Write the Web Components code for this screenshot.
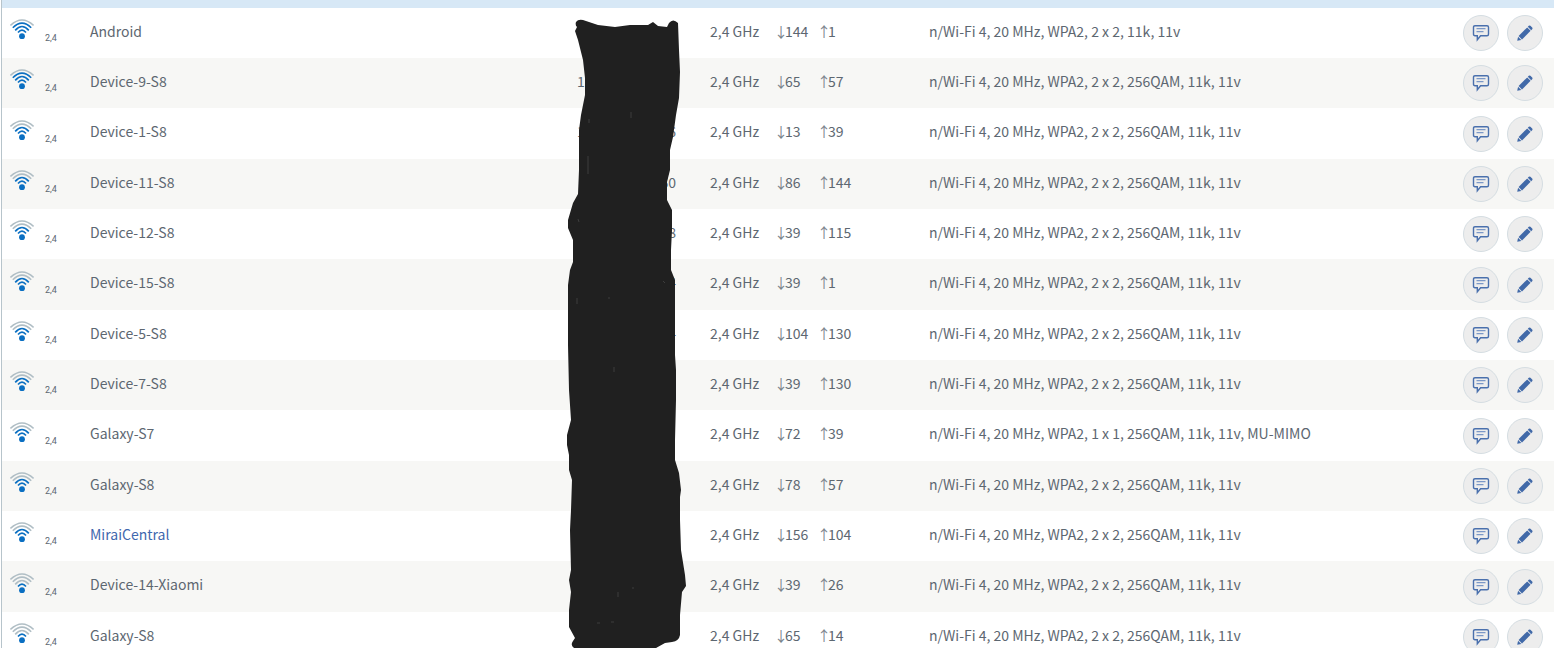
<!DOCTYPE html>
<html lang="en">
<head>
<meta charset="utf-8">
<title>Wireless devices</title>
<style>
  body {
    margin: 0;
    height: 100vh;
    overflow: hidden;
    background: #fff;
    color: #5d6771;
    font: 14px/20px "Noto Sans CJK SC", "Noto Sans", sans-serif;
  }
</style>
</head>
<body>
<device-list>
  <redaction-mark slot="overlay"></redaction-mark>
</device-list>

<script>
// signal strength, 0-4 blue arcs over the dot
class WifiSignal extends HTMLElement {
  constructor() {
    super();
    this.attachShadow({ mode: 'open' });
  }

  connectedCallback() {
    const level = Number(this.getAttribute('level'));
    const arcs = [
      'M8 15.4Q12 10.8 16 15.4',
      'M5.2 13.4Q12 5.6 18.8 13.4',
      'M2.8 10.8Q12 1.4 21.2 10.8',
      'M0.4 8.4Q12 -2.4 23.6 8.4'
    ];
    this.shadowRoot.innerHTML = `
      <style>
        :host { display: flex; gap: 11px; height: 27px; }
        svg { width: 24px; height: 24px; }
        path { fill: none; stroke: #b0bec5; stroke-width: 1.6; }
        path.on { stroke: #0a6fc2; }
        circle { fill: #0a6fc2; }
        span { align-self: flex-end; font: 9px/12px Roboto, sans-serif; }
      </style>
      <svg viewBox="0 0 24 24" role="img" aria-label="Signal ${level} of 4">
        ${arcs.map((d, i) => `<path class="${i < level ? 'on' : ''}" d="${d}"/>`).join('')}
        <circle cx="12" cy="19.2" r="2.9"/>
      </svg>
      <span><slot></slot></span>
    `;
  }
}

class RoundButton extends HTMLElement {
  constructor() {
    super();
    this.attachShadow({ mode: 'open' });
  }

  connectedCallback() {
    const icons = {
      note: `
        <path d="M3 1.7h12q1.5 0 1.5 1.5v7q0 1.5-1.5 1.5H8.6L5.3 15.7v-4H3q-1.5 0-1.5-1.5v-7q0-1.5 1.5-1.5z" fill="none" stroke="#4a70ad" stroke-width="1.4"/>
        <path d="M4.5 4.7h9M4.5 7.7h7" fill="none" stroke="#7b98c7" stroke-width="1.3"/>`,
      edit: `
        <path d="M2.6 12L11.2 3.400l3.400 3.400L6 15.400z" fill="#4169a8"/>
        <path d="M1.2 16.8l.9-4.1 3.2 3.2z" fill="#4169a8"/>
        <path d="M11.8 2.800l1-1q.8-.8 1.600 0l1.800 1.800q.8.8 0 1.600l-1 1z" fill="#4169a8"/>`
    };
    this.shadowRoot.innerHTML = `
      <style>
        :host { display: block; }
        button {
          display: flex;
          align-items: center;
          justify-content: center;
          width: 36px;
          height: 36px;
          padding: 0;
          border: 1px solid #d5dde2;
          border-radius: 50%;
          background: #ededed;
        }
        svg { width: 18px; height: 18px; }
      </style>
      <button type="button" aria-label="${this.getAttribute('label')}">
        <svg viewBox="0 0 18 18">${icons[this.getAttribute('icon')]}</svg>
      </button>
    `;
  }
}

class LinkRate extends HTMLElement {
  constructor() {
    super();
    this.attachShadow({ mode: 'open' });
    this.shadowRoot.innerHTML = `
      <style>
        :host { display: flex; }
        .arrow { display: flex; justify-content: center; width: 8px; color: #7b848c; }
      </style>
      <span class="arrow"><slot name="arrow"></slot></span><slot></slot>
    `;
  }
}

// hand-painted marker over the address column
class RedactionMark extends HTMLElement {
  constructor() {
    super();
    this.attachShadow({ mode: 'open' });
    this.shadowRoot.innerHTML = `
      <style>
        :host { position: absolute; top: 0; left: 558px; pointer-events: none; }
        svg { display: block; width: 140px; height: 648px; }
      </style>
      <svg viewBox="0 0 140 648" aria-hidden="true">
        <path fill="#202020" d="M16 22Q18 19 23 20L38 25L55 27L70 25H88L93 22L98 26L107 27L109 23Q113 18 118 23L119 50L120 72L119 98L116 115L113 137L110 150V170L107 182V200L112 210V230L111 250L111 270L115 280L115 320V355L116 370V400L115 440V460L119 473L121 490L120 497V520L121 550L125 575L126 586L122 592L120 615V635Q119 641 112 642L105 643L96 648H14Q10 645 13 641L15 638L9 627V610L11 592L9 580L11 570L10 530L11 510L12 480L9 470V455L7 445V435L11 420L9 390L8 345V285L10 270L13 262V240L8 228V220L13 203L18 194L19 170V130L21 115L25 95V78L23 60L18 40L15 31L17 27Q15 25 16 22z"/>
        <g stroke="#4a4a4a" stroke-width="0.7">
          <path d="M71 112v6M29 119v4M28 156v18M18 219l1 3M49 297v2M17 298v6M103 281l2 2M54 367v5M58 592v5M72 588h2M37 623h3M51 622h3"/>
        </g>
      </svg>
    `;
  }
}

class DeviceList extends HTMLElement {
  constructor() {
    super();
    this.attachShadow({ mode: 'open' });
  }

  connectedCallback() {
    const std = 'n/Wi-Fi 4, 20 MHz, WPA2, 2 x 2, 256QAM, 11k, 11v';
    const devices = [
      { name: 'Android', level: 3, down: 144, up: 1, info: 'n/Wi-Fi 4, 20 MHz, WPA2, 2 x 2, 11k, 11v' },
      { name: 'Device-9-S8', level: 3, first: '1', down: 65, up: 57, info: std },
      { name: 'Device-1-S8', level: 2, first: '1', last: '6', down: 13, up: 39, info: std },
      { name: 'Device-11-S8', level: 2, last: '60', down: 86, up: 144, info: std },
      { name: 'Device-12-S8', level: 2, last: '8', down: 39, up: 115, info: std },
      { name: 'Device-15-S8', level: 2, last: '4', down: 39, up: 1, info: std },
      { name: 'Device-5-S8', level: 2, last: '4', down: 104, up: 130, info: std },
      { name: 'Device-7-S8', level: 2, down: 39, up: 130, info: std },
      { name: 'Galaxy-S7', level: 2, down: 72, up: 39, info: 'n/Wi-Fi 4, 20 MHz, WPA2, 1 x 1, 256QAM, 11k, 11v, MU-MIMO' },
      { name: 'Galaxy-S8', level: 2, down: 78, up: 57, info: std },
      { name: 'MiraiCentral', level: 2, link: true, down: 156, up: 104, info: std },
      { name: 'Device-14-Xiaomi', level: 1, down: 39, up: 26, info: std },
      { name: 'Galaxy-S8', level: 1, down: 65, up: 14, info: std }
    ];

    this.shadowRoot.innerHTML = `
      <style>
        :host { display: block; position: relative; margin-left: 1px; border-left: 1px solid #b7c4cb; }
        .head { height: 8px; background: #d7e8f6; }
        table { width: 100%; table-layout: fixed; border-collapse: collapse; }
        tr { height: 50px; }
        tr:nth-child(3n) { height: 51px; }
        tr:nth-child(even) { background: #f7f7f5; }
        td { padding: 0; vertical-align: middle; white-space: nowrap; }
        td.text { padding-top: 13px; vertical-align: top; }
        td.state { padding: 0 0 5px 8px; }
        .signal { width: 88px; }
        .address { width: 133px; }
        .band { width: 67px; }
        .rate { width: 152px; }
        .info { width: 534px; }
        .tools { width: 91px; }
        .ends { display: flex; justify-content: space-between; width: 99px; }
        .rates { display: grid; grid-template-columns: 43px 1fr; }
        .buttons { display: flex; gap: 8px; }
        a { color: #3f68ae; text-decoration: none; }
      </style>
      <div class="head"></div>
      <table>
        <colgroup>
          <col class="signal"><col><col class="address"><col class="band">
          <col class="rate"><col class="info"><col class="tools">
        </colgroup>
        <tbody>
          ${devices.map(d => `
            <tr>
              <td class="state"><wifi-signal level="${d.level}">2,4</wifi-signal></td>
              <td class="text">${d.link ? `<a href="#">${d.name}</a>` : d.name}</td>
              <td class="text"><div class="ends"><span>${d.first || ''}</span><span>${d.last || ''}</span></div></td>
              <td class="text">2,4 GHz</td>
              <td class="text">
                <div class="rates">
                  <link-rate><span slot="arrow">↓</span>${d.down}</link-rate>
                  <link-rate><span slot="arrow">↑</span>${d.up}</link-rate>
                </div>
              </td>
              <td class="text">${d.info}</td>
              <td>
                <div class="buttons">
                  <round-button icon="note" label="Comment on ${d.name}"></round-button>
                  <round-button icon="edit" label="Edit ${d.name}"></round-button>
                </div>
              </td>
            </tr>`).join('')}
        </tbody>
      </table>
      <slot name="overlay"></slot>
    `;
  }
}

customElements.define('wifi-signal', WifiSignal);
customElements.define('round-button', RoundButton);
customElements.define('link-rate', LinkRate);
customElements.define('redaction-mark', RedactionMark);
customElements.define('device-list', DeviceList);
</script>
</body>
</html>
